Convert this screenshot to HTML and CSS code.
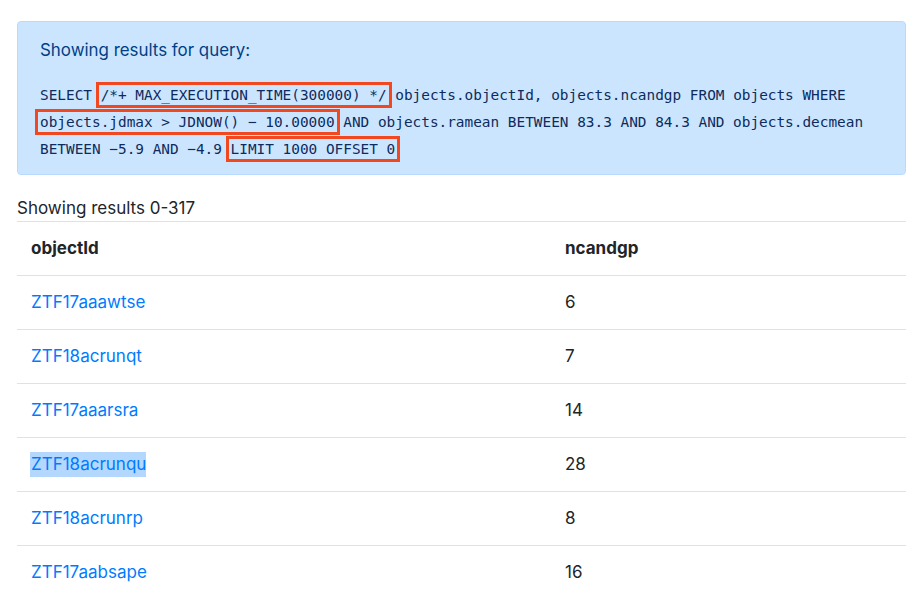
FILE: index.html
```html
<!DOCTYPE html>
<html>
<head>
<meta charset="utf-8">
<link rel="stylesheet" href="styles.css">
</head>
<body>
<div class="page">
  <div class="alert">
    <h4 class="alert-title">Showing results for query:</h4>
    <div class="query">SELECT <span class="mark">/*+ MAX_EXECUTION_TIME(300000) */</span> objects.objectId, objects.ncandgp FROM objects WHERE <span class="mark">objects.jdmax &gt; JDNOW() − 10.00000</span> AND objects.ramean BETWEEN 83.3 AND 84.3 AND objects.decmean BETWEEN −5.9 AND −4.9 <span class="mark">LIMIT 1000 OFFSET 0 </span></div>
  </div>
  <p class="count">Showing results 0-317</p>
  <table class="results">
    <thead>
      <tr><th class="c1">objectId</th><th>ncandgp</th></tr>
    </thead>
    <tbody>
      <tr><td><a href="#">ZTF17aaawtse</a></td><td>6</td></tr>
      <tr><td><a href="#">ZTF18acrunqt</a></td><td>7</td></tr>
      <tr><td><a href="#">ZTF17aaarsra</a></td><td>14</td></tr>
      <tr><td><a href="#" class="selected">ZTF18acrunqu</a></td><td>28</td></tr>
      <tr><td><a href="#">ZTF18acrunrp</a></td><td>8</td></tr>
      <tr><td><a href="#">ZTF17aabsape</a></td><td>16</td></tr>
    </tbody>
  </table>
</div>
</body>
</html>
```

FILE: styles.css
```css
html, body {
  margin: 0;
  padding: 0;
  background: #fff;
}
body {
  font-family: Inter, "Liberation Sans", Arial, sans-serif;
  font-size: 17px;
  color: #212529;
  overflow: hidden;
}
.page {
  padding: 21px 11px 0 17px;
}
.alert {
  background: #cce5ff;
  border: 1px solid #b8daff;
  border-radius: 4px;
  color: #004085;
  padding: 16px 22px 11px 22px;
}
.alert-title {
  margin: 0;
  font-size: 16.9px;
  font-weight: normal;
  line-height: 24px;
}
.query {
  margin-top: 20px;
  font-family: "DejaVu Sans Mono", Menlo, monospace;
  font-size: 14.4px;
  line-height: 27px;
  color: #0d2b5c;
}
.mark {
  outline: 3px solid #f2481f;
  outline-offset: 2px;
}
.count {
  margin: 21px 0 0 0;
  line-height: 24px;
}
.results {
  width: 100%;
  border-collapse: collapse;
  margin-top: 1px;
}
.results th, .results td {
  text-align: left;
  padding: 15px 14px;
  line-height: 23px;
  border-top: 1px solid #dee2e6;
  vertical-align: top;
}
.results th {
  font-weight: bold;
}
.results .c1 {
  width: 506px;
}
.results a {
  color: #007bff;
  text-decoration: none;
}
.results a.selected {
  background: #b4d7fd;
  padding: 2px 0 3px 0;
  margin-left: -1px;
  padding-left: 1px;
}
```
